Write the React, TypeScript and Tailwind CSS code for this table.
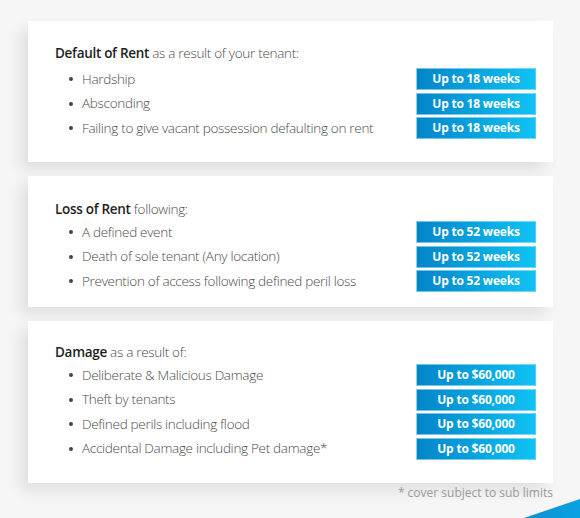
type Row = { label: string; value: string }

type Section = {
  strong: string
  rest: string
  rows: Row[]
  pad: string
  titleGap: string
}

const sections: Section[] = [
  {
    strong: "Default of Rent",
    rest: " as a result of your tenant:",
    pad: "pt-[22px] pb-[23px]",
    titleGap: "mb-[5px]",
    rows: [
      { label: "Hardship", value: "Up to 18 weeks" },
      { label: "Absconding", value: "Up to 18 weeks" },
      { label: "Failing to give vacant possession defaulting on rent", value: "Up to 18 weeks" },
    ],
  },
  {
    strong: "Loss of Rent",
    rest: " following:",
    pad: "pt-[23px] pb-[15px]",
    titleGap: "mb-[2px]",
    rows: [
      { label: "A defined event", value: "Up to 52 weeks" },
      { label: "Death of sole tenant (Any location)", value: "Up to 52 weeks" },
      { label: "Prevention of access following defined peril loss", value: "Up to 52 weeks" },
    ],
  },
  {
    strong: "Damage",
    rest: " as a result of:",
    pad: "pt-[21px] pb-[23px]",
    titleGap: "mb-[2px]",
    rows: [
      { label: "Deliberate & Malicious Damage", value: "Up to $60,000" },
      { label: "Theft by tenants", value: "Up to $60,000" },
      { label: "Defined perils including flood", value: "Up to $60,000" },
      { label: "Accidental Damage including Pet damage*", value: "Up to $60,000" },
    ],
  },
]

function Card({ s }: { s: Section }) {
  return (
    <div className={`bg-white shadow-[-8px_8px_14px_rgba(0,0,0,0.09)] pl-[27px] pr-[17px] ${s.pad}`}>
      <p className={`text-[13.5px] leading-[20px] font-light tracking-[-0.3px] text-[#4a4a4a] ${s.titleGap}`}>
        <span className="font-semibold text-[#1e1e1e]">{s.strong}</span>
        {s.rest}
      </p>
      <ul className="flex flex-col gap-[2.5px]">
        {s.rows.map((r, i) => (
          <li key={i} className="flex items-center justify-between h-[22px]">
            <span className="flex items-center text-[13.5px] font-light tracking-[-0.3px] text-[#4a4a4a]">
              <span className="w-[4px] h-[4px] rounded-full bg-[#444] ml-[14px] mr-[9px]" />
              {r.label}
            </span>
            <span className="w-[120px] h-[22px] flex items-center justify-center bg-gradient-to-r from-[#0585ca] to-[#10c2f4] border border-[#bfe9f9]/60 text-white text-[12px] font-bold tracking-[-0.2px]">
              {r.value}
            </span>
          </li>
        ))}
      </ul>
    </div>
  )
}

export default function App() {
  return (
    <div
      className="relative w-[580px] h-[518px] overflow-hidden bg-[#f6f6f6]"
      style={{ fontFamily: '"Open Sans", "Liberation Sans", sans-serif' }}
    >
      <div className="flex flex-col gap-[14px] pt-[21px] pl-[28px] pr-[27px]">
        {sections.map((s, i) => (
          <Card key={i} s={s} />
        ))}
      </div>
      <p className="text-right pr-[27px] pt-[1px] text-[12px] text-[#9a9a9a]">* cover subject to sub limits</p>
      <svg className="absolute right-0 bottom-0" width="56" height="19" viewBox="0 0 56 19">
        <defs>
          <linearGradient id="tri" x1="0" x2="1" y1="0" y2="0">
            <stop offset="0" stopColor="#0b8fd3" />
            <stop offset="1" stopColor="#0aa2e2" />
          </linearGradient>
        </defs>
        <polygon points="0,19 56,0 56,19" fill="url(#tri)" />
      </svg>
    </div>
  )
}
